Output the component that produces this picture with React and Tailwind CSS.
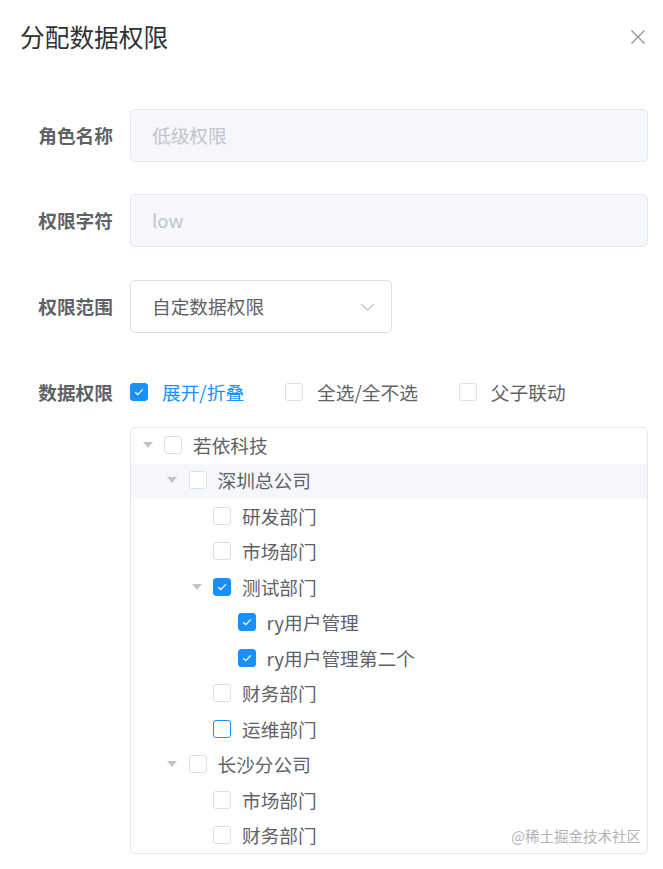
import React from 'react';

const font = { fontFamily: '"Noto Sans CJK SC", "Noto Sans", sans-serif' };

const treeData = [
  { label: '若依科技', level: 0, expand: true },
  { label: '深圳总公司', level: 1, expand: true, hover: true },
  { label: '研发部门', level: 2 },
  { label: '市场部门', level: 2 },
  { label: '测试部门', level: 2, expand: true, checked: true },
  { label: 'ry用户管理', level: 3, checked: true },
  { label: 'ry用户管理第二个', level: 3, checked: true },
  { label: '财务部门', level: 2 },
  { label: '运维部门', level: 2, focus: true },
  { label: '长沙分公司', level: 1, expand: true },
  { label: '市场部门', level: 2 },
  { label: '财务部门', level: 2 },
];

const Checkbox = ({ checked, focus }) => {
  if (checked) {
    return (
      <span className="flex h-[18px] w-[18px] shrink-0 items-center justify-center rounded-[3px] border border-[#1890ff] bg-[#1890ff]">
        <svg width="10" height="8" viewBox="0 0 10 8" fill="none">
          <path d="M1.2 4.2 L3.8 6.6 L8.8 1.4" stroke="#fff" strokeWidth="1.3" />
        </svg>
      </span>
    );
  }
  return (
    <span
      className={
        'block h-[18px] w-[18px] shrink-0 rounded-[3px] border bg-white ' +
        (focus ? 'border-[#1890ff]' : 'border-[#dcdfe6]')
      }
    />
  );
};

const Caret = () => (
  <svg width="10" height="6" viewBox="0 0 10 6">
    <path d="M0 0 L10 0 L5 6 Z" fill="#c0c4cc" />
  </svg>
);

const FormRow = ({ label, children, className = '' }) => (
  <div className={'flex ' + className}>
    <label className="flex w-[110px] shrink-0 items-center justify-end pr-[17px] text-[18.7px] font-bold text-[#606266]">
      {label}
    </label>
    <div className="flex-1">{children}</div>
  </div>
);

const App = () => {
  return (
    <div className="min-h-[869px] w-[663px] bg-white" style={font}>
      <div className="flex items-center justify-between pl-5 pr-[17px] pt-[20px]">
        <h2 className="text-[24.7px] leading-[32px] text-[#303133]">分配数据权限</h2>
        <svg width="16" height="16" viewBox="0 0 16 16" className="mt-[1px]">
          <path d="M1.5 1.5 L14.5 14.5 M14.5 1.5 L1.5 14.5" stroke="#909399" strokeWidth="1.3" />
        </svg>
      </div>

      <div className="pl-5 pr-[15px] pt-[57px]">
        <FormRow label="角色名称" className="mb-[32px] h-[53px]">
          <div className="flex h-[53px] items-center rounded-[5px] border border-[#e4e7ed] bg-[#f5f7fa] pl-[21px] text-[18.7px] text-[#c0c4cc]">
            低级权限
          </div>
        </FormRow>
        <FormRow label="权限字符" className="mb-[33px] h-[53px]">
          <div className="flex h-[53px] items-center rounded-[5px] border border-[#e4e7ed] bg-[#f5f7fa] pl-[21px] text-[18.7px] text-[#c0c4cc]">
            low
          </div>
        </FormRow>
        <FormRow label="权限范围" className="mb-[32px] h-[53px]">
          <div className="flex h-[53px] w-[262px] items-center justify-between rounded-[5px] border border-[#dcdfe6] bg-white pl-[21px] pr-[16px] text-[18.7px] text-[#606266]">
            <span>自定数据权限</span>
            <svg width="15" height="8" viewBox="0 0 15 8" fill="none">
              <path d="M1 1 L7.5 7 L14 1" stroke="#c0c4cc" strokeWidth="1.2" />
            </svg>
          </div>
        </FormRow>
        <FormRow label="数据权限" className="h-[54px]">
          <div className="flex h-[54px] items-center text-[18.7px]">
            <div className="mr-[41px] flex items-center">
              <Checkbox checked />
              <span className="pl-[14px] text-[#1890ff]">展开/折叠</span>
            </div>
            <div className="mr-[41px] flex items-center">
              <Checkbox />
              <span className="pl-[14px] text-[#606266]">全选/全不选</span>
            </div>
            <div className="flex items-center">
              <Checkbox />
              <span className="pl-[14px] text-[#606266]">父子联动</span>
            </div>
          </div>
        </FormRow>
        <div className="ml-[110px] mt-[8px]">
          <div className="relative h-[427px] rounded-[5px] border border-[#e5e6e9] bg-white">
            {treeData.map((node, i) => (
              <div
                key={i}
                className={
                  'flex h-[35.5px] items-center pb-[2px] text-[18.7px] text-[#606266] ' +
                  (node.hover ? 'bg-[#f5f7fa]' : '')
                }
                style={{ paddingLeft: node.level * 24.5 }}
              >
                <span className="flex w-[33px] shrink-0 items-center justify-center">
                  {node.expand ? <Caret /> : null}
                </span>
                <Checkbox checked={node.checked} focus={node.focus} />
                <span className="pl-[11px]">{node.label}</span>
              </div>
            ))}
            <span className="absolute bottom-[6px] right-[6px] text-[14.5px] text-[#b0b3b8]">
              @稀土掘金技术社区
            </span>
          </div>
        </div>
      </div>
    </div>
  );
};

export default App;
